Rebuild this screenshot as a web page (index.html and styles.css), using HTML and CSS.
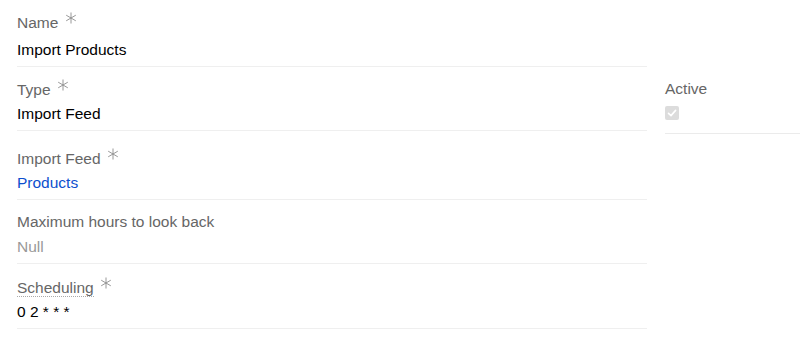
FILE: index.html
```html
<!DOCTYPE html>
<html>
	<head>
		<meta charset="UTF-8">
		<title>Scheduled Job</title>
		<link rel="stylesheet" href="styles.css">
	</head>
	<body>
		<div class="detail">
			<div class="col-main">
				<div class="field field-first">
					<div class="label">Name <span class="req"><svg viewBox="0 0 12 12" width="12" height="12"><path d="M6 0.5V11.5M1.2 3.2L10.8 8.8M1.2 8.8L10.8 3.2"/></svg></span></div>
					<div class="value">Import Products</div>
				</div>
				<div class="field">
					<div class="label">Type <span class="req"><svg viewBox="0 0 12 12" width="12" height="12"><path d="M6 0.5V11.5M1.2 3.2L10.8 8.8M1.2 8.8L10.8 3.2"/></svg></span></div>
					<div class="value">Import Feed</div>
				</div>
				<div class="field field-link">
					<div class="label">Import Feed <span class="req"><svg viewBox="0 0 12 12" width="12" height="12"><path d="M6 0.5V11.5M1.2 3.2L10.8 8.8M1.2 8.8L10.8 3.2"/></svg></span></div>
					<div class="value"><a href="#">Products</a></div>
				</div>
				<div class="field field-num">
					<div class="label">Maximum hours to look back</div>
					<div class="value empty">Null</div>
				</div>
				<div class="field field-last">
					<div class="label"><span class="hint">Scheduling</span> <span class="req"><svg viewBox="0 0 12 12" width="12" height="12"><path d="M6 0.5V11.5M1.2 3.2L10.8 8.8M1.2 8.8L10.8 3.2"/></svg></span></div>
					<div class="value">0 2 * * *</div>
				</div>
			</div>
			<div class="col-side">
				<div class="field field-bool">
					<div class="label">Active</div>
					<div class="value"><span class="check"><svg viewBox="0 0 14 14" width="14" height="14"><path d="M3.5 7.3L6 9.6L10.6 4.4"/></svg></span></div>
				</div>
			</div>
		</div>
	</body>
</html>
```

FILE: styles.css
```css
body{
margin: 0;
font-family: "Liberation Sans", Arial, Helvetica, sans-serif;
font-size: 15.5px;
color: #000;
background: #fff;
}
.detail{
display: flex;
gap: 18px;
padding-left: 17px;
overflow: hidden;
}
.col-main{
width: 630px;
flex: none;
}
.col-side{
width: 160px;
flex: none;
padding-top: 67px;
}
.field{
border-bottom: 1px solid #efefef;
padding: 13px 0 6px;
}
.field-first .value{
margin-top: 7px;
}
.field-link{
padding-top: 18px;
}
.field-num{
padding-top: 12px;
}
.field-num .value{
margin-top: 5px;
}
.field-last{
padding-top: 14px;
}
.label{
color: #666;
line-height: 20px;
height: 20px;
}
.value{
line-height: 20px;
margin-top: 4px;
}
.value a{
color: #0c4fce;
text-decoration: none;
}
.empty{
color: #999;
}
.hint{
border-bottom: 1px dotted #aaa;
}
.req{
display: inline-block;
vertical-align: top;
position: relative;
top: -1px;
margin-left: 2px;
}
.req svg{
display: block;
}
.req path{
stroke: #8c8c8c;
stroke-width: 0.9;
fill: none;
}
.field-bool{
padding-top: 12px;
padding-bottom: 10px;
border-bottom-color: #ebebeb;
}
.field-bool .value{
display: flex;
align-items: center;
height: 20px;
}
.check{
display: block;
width: 14px;
height: 14px;
border-radius: 2px;
background: #dcdcdc;
}
.check svg{
display: block;
}
.check path{
stroke: #fff;
stroke-width: 1.6;
fill: none;
stroke-linecap: round;
stroke-linejoin: round;
}
```
